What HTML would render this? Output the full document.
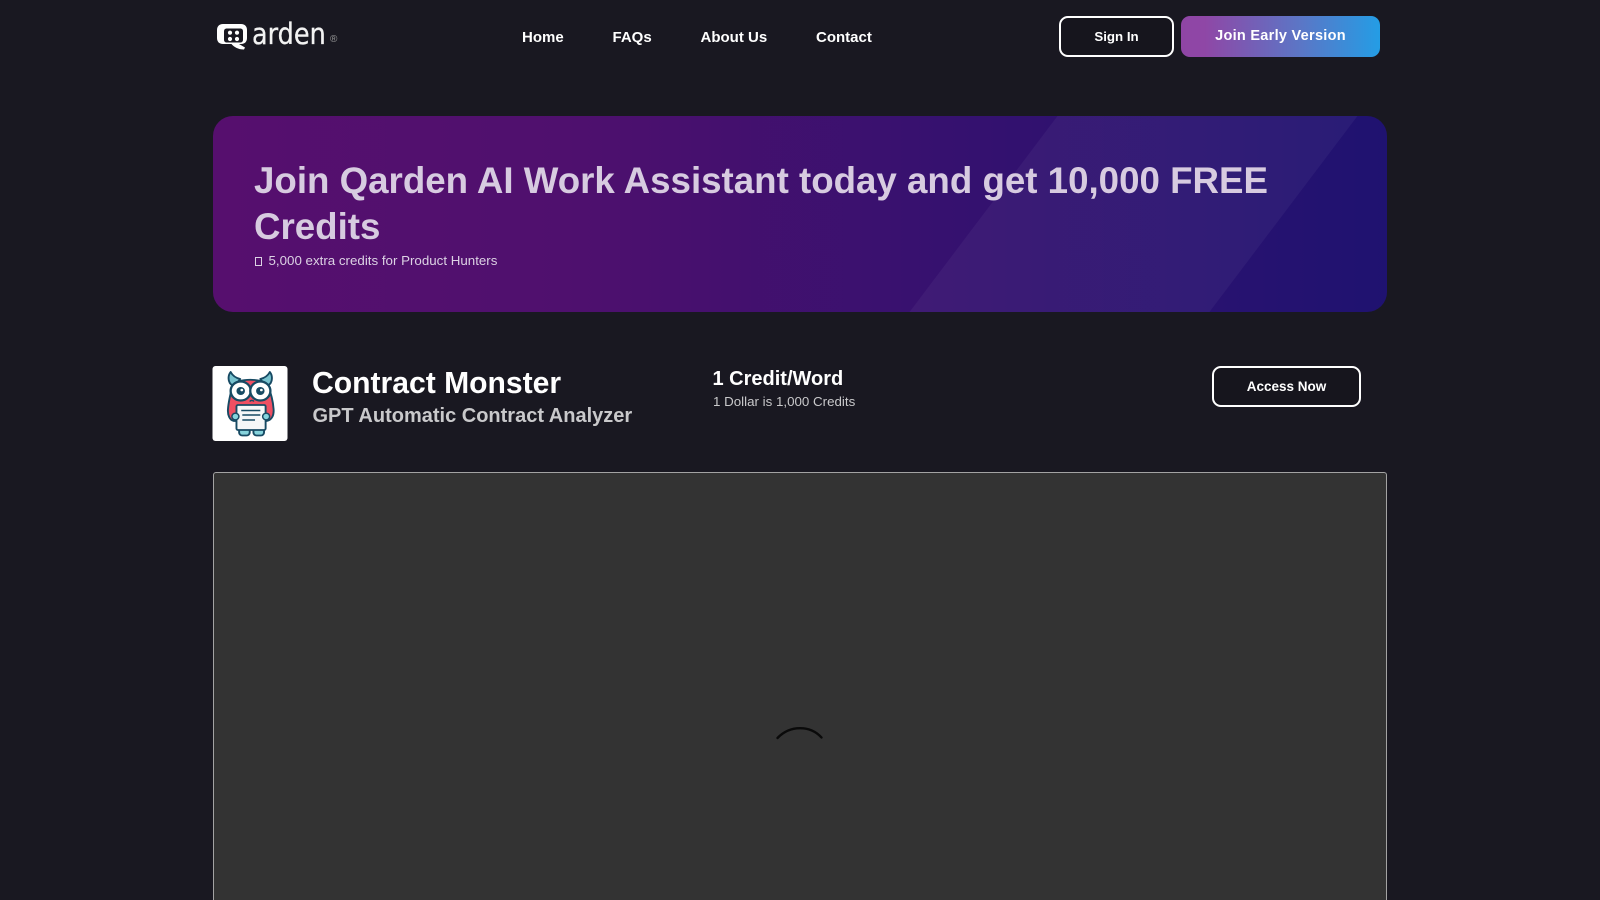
<!DOCTYPE html>
<html lang="en">
<head>
<meta charset="utf-8">
<title>Contract Monster</title>
<style>
*{box-sizing:border-box;margin:0;padding:0}
html,body{width:1600px;height:900px;overflow:hidden;background:#191821;font-family:"Liberation Sans",Arial,sans-serif;color:#fff}
.abs{position:absolute;white-space:nowrap}
.nav{font-size:15px;font-weight:700;top:29px;line-height:17px}
.btn{position:absolute;border:2px solid #fff;border-radius:9px;display:flex;align-items:center;justify-content:center;font-weight:700;color:#fff;background:#16151d}
.banner{position:absolute;left:212.500px;top:116px;width:1174.500px;height:196px;border-radius:20px;overflow:hidden;background:linear-gradient(90deg,#560f6e 0%,#4f106e 30%,#36116f 62%,#1f1270 100%)}
.panel{position:absolute;left:212.500px;top:472px;width:1174.500px;height:428px;background:#333;border:1px solid #a3a3a3;border-bottom:0;border-radius:3px 3px 0 0}
</style>
</head>
<body>
<svg class="abs" style="left:216px;top:22px" width="34" height="30" viewBox="0 0 34 30">
<path fill-rule="evenodd" d="M7 2H25C29 2 31 4.500 31 8V16C31 19.500 29 22 25 22H23L29 25.500 28 27.500C22 27.500 18 25 15.500 22H7C3 22 1 19.500 1 16V8C1 4.500 3 2 7 2ZM11 6.500C9 6.500 8 7.500 8 9.500V17.500C8 19.500 9 20.500 11 20.500H24C26 20.500 27 19.500 27 17.500V9.500C27 7.500 26 6.500 24 6.500Z" fill="#fff"/>
<circle cx="14" cy="10.700" r="2.100" fill="#fff"/><circle cx="21" cy="10.700" r="2.100" fill="#fff"/>
<circle cx="14" cy="17" r="2.100" fill="#fff"/><circle cx="21" cy="17" r="2.100" fill="#fff"/>
</svg>
<div class="abs" style="left:252px;top:16px;font-family:'DejaVu Sans',sans-serif;font-size:29px;line-height:36px;font-weight:400;color:#f2f2f2;-webkit-text-stroke:.3px #f2f2f2;transform:scaleX(.88);transform-origin:left">arden</div>
<div class="abs" style="left:330px;top:34px;font-size:10px;line-height:12px;color:#9a9a9a">®</div>

<div class="abs nav" style="left:522px">Home</div>
<div class="abs nav" style="left:612.500px">FAQs</div>
<div class="abs nav" style="left:700.500px">About Us</div>
<div class="abs nav" style="left:816px">Contact</div>

<div class="btn" style="left:1059px;top:16px;width:115px;height:41px;font-size:13.300px;padding-bottom:1px">Sign In</div>
<div class="abs" style="left:1181px;top:16px;width:199px;height:41px;border-radius:9px;background:linear-gradient(90deg,#8f45a5 0%,#8f47a6 12%,#5b76c6 60%,#249de5 100%);display:flex;align-items:center;justify-content:center;padding-bottom:2px;font-size:14.500px;font-weight:700;letter-spacing:.28px">Join Early Version</div>

<div class="banner">
<svg class="abs" style="left:0;top:0" width="1175" height="196"><polygon points="844.500,0 1144.500,0 996.500,196 696.500,196" fill="#fff" fill-opacity=".045"/></svg>
<div class="abs" style="left:41.500px;top:42px;width:1060px;white-space:normal;font-size:36.700px;line-height:46px;font-weight:700;color:#d7cbe0">Join Qarden AI Work Assistant today and get 10,000 FREE Credits</div>
<div class="abs" style="left:42.500px;top:135.500px;font-size:13.330px;line-height:18px;color:#dcd2e4"><span style="display:inline-block;width:7px;height:9px;border:1px solid #dcd2e4;margin-right:6.500px;vertical-align:-1px"></span>5,000 extra credits for Product Hunters</div>
</div>

<svg class="abs" style="left:212px;top:365px" width="76" height="76" viewBox="0 0 76 76">
<rect x=".5" y="1" width="75" height="75" rx="3" fill="#fff"/>
<g transform="translate(-1.500 0) scale(1.060 1)">
<path d="M23 21C16 20 16 11 19 7 21 11 24 13 28 14Z" fill="#78c3cf" stroke="#174a63" stroke-width="1.800" stroke-linejoin="round"/>
<path d="M52 21C59 20 59 11 56 7 54 11 51 13 47 14Z" fill="#78c3cf" stroke="#174a63" stroke-width="1.800" stroke-linejoin="round"/>
<rect x="27" y="61" width="10" height="9.500" rx="3" fill="#86d3dc" stroke="#174a63" stroke-width="1.800"/>
<rect x="40.500" y="61" width="10" height="9.500" rx="3" fill="#86d3dc" stroke="#174a63" stroke-width="1.800"/>
<path d="M21 20C25 13 50 13 54 20 57 28 59 36 59.500 44 60 50 58 55 53 56H22C18 55 16 50 16.500 44 17 36 19 28 21 20Z" fill="#ee4f62" stroke="#174a63" stroke-width="1.800" stroke-linejoin="round"/>
<circle cx="28.500" cy="26" r="9.500" fill="#fff" stroke="#174a63" stroke-width="2.200"/>
<circle cx="47" cy="26" r="9.500" fill="#fff" stroke="#174a63" stroke-width="2.200"/>
<circle cx="28.500" cy="26" r="4" fill="#174a63"/><circle cx="47" cy="26" r="4" fill="#174a63"/>
<circle cx="29.500" cy="25" r="1.300" fill="#fff"/><circle cx="48" cy="25" r="1.300" fill="#fff"/>
<path d="M37 36.500C38 35 40 35 41 36.500" fill="none" stroke="#174a63" stroke-width="1.400"/>
<rect x="24.500" y="40" width="27.500" height="25" rx="1.500" fill="#f5f7f8" stroke="#174a63" stroke-width="1.800"/>
<path d="M29 45.500H47M30 50H47M30 55H42" stroke="#174a63" stroke-width="1.500"/>
<circle cx="23.500" cy="51.500" r="3.300" fill="#86d3dc" stroke="#174a63" stroke-width="1.400"/>
<circle cx="52.500" cy="51.500" r="3.300" fill="#86d3dc" stroke="#174a63" stroke-width="1.400"/>
</g>
</svg>

<div class="abs" style="left:312px;top:366px;font-size:30.100px;line-height:36px;font-weight:700;color:#fff">Contract Monster</div>
<div class="abs" style="left:312.500px;top:403.500px;font-size:20px;line-height:25px;font-weight:700;color:#c9c9cb">GPT Automatic Contract Analyzer</div>
<div class="abs" style="left:712.500px;top:367px;font-size:20px;line-height:24px;font-weight:700;color:#fff">1 Credit/Word</div>
<div class="abs" style="left:713px;top:393px;font-size:13.330px;line-height:18px;color:#c9c9cb">1 Dollar is 1,000 Credits</div>
<div class="btn" style="left:1212px;top:366px;width:149px;height:41px;font-size:13.500px;padding-bottom:1px">Access Now</div>

<div class="panel"></div>
<svg class="abs" style="left:770px;top:720px" width="60" height="30" viewBox="0 0 60 30">
<path d="M7.500 18C20 5 40 5 51.500 17.500" fill="none" stroke="#0a0a0a" stroke-width="2.400" stroke-linecap="round"/>
</svg>
</body>
</html>
